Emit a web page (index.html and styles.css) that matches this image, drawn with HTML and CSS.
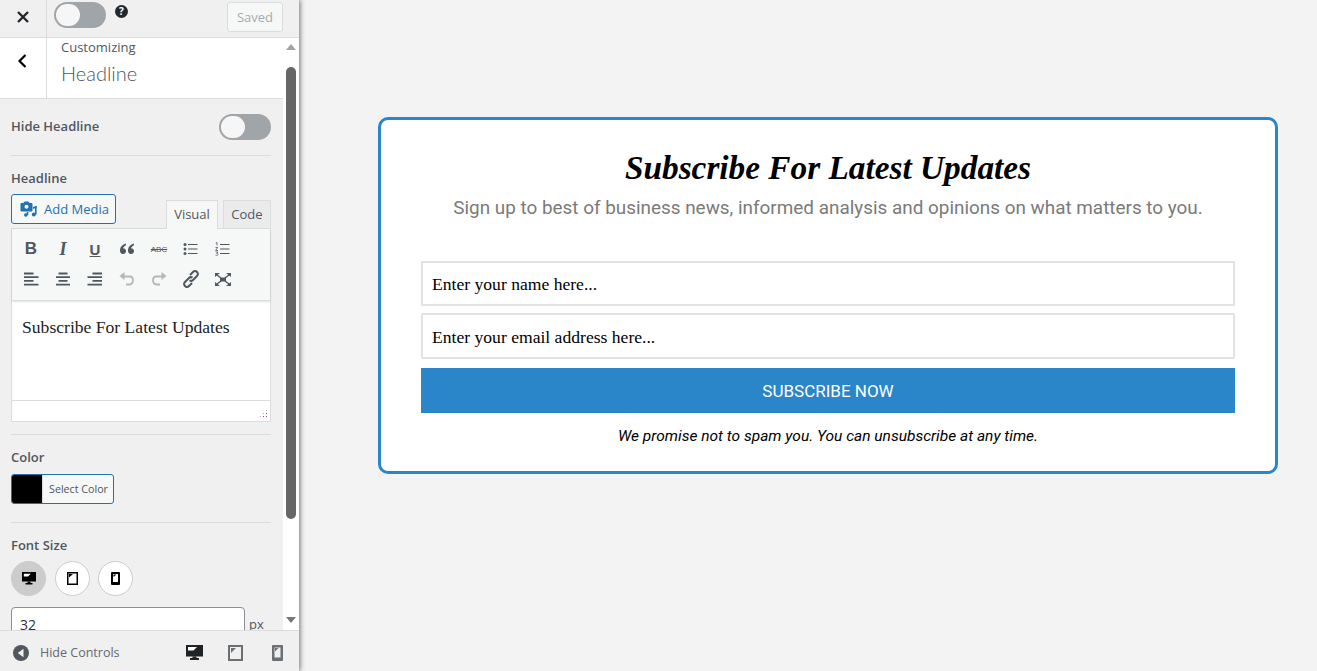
FILE: index.html
```html
<!DOCTYPE html>
<html lang="en">
<head>
<meta charset="UTF-8">
<title>Customizing Headline</title>
<link rel="stylesheet" href="styles.css">
</head>
<body>

<div class="app">
  <aside class="sidebar">
    <header class="topbar">
      <button class="close-btn">
        <svg width="14" height="14" viewBox="0 0 14 14"><path d="M2 2l10 10M12 2L2 12" stroke="#23282d" stroke-width="2.400" fill="none"/></svg>
      </button>
      <div class="topbar-main">
        <span class="toggle"><span class="knob"></span></span>
        <span class="help">?</span>
        <button class="saved-btn">Saved</button>
      </div>
    </header>

    <div class="scroller">
      <div class="panel">
        <div class="section-head">
          <button class="back-btn">
            <svg width="12" height="16" viewBox="0 0 12 16"><path d="M9.500 2L3.500 8l6 6" stroke="#000" stroke-width="2.200" fill="none"/></svg>
          </button>
          <div class="section-title">
            <span class="crumb">Customizing</span>
            <h3>Headline</h3>
          </div>
        </div>

        <div class="control control-row">
          <label class="ctl-label">Hide Headline</label>
          <span class="toggle"><span class="knob"></span></span>
        </div>

        <div class="control control-editor">
          <label class="ctl-label">Headline</label>
          <div class="editor-tools">
            <button class="media-btn">
              <svg width="18" height="16" viewBox="0 0 18 16"><path d="M1 2.500h2.500L4.500 1h4l1 1.500H12v7.500H1z" fill="#2271b1" stroke="#2271b1" stroke-linejoin="round"/><circle cx="6.500" cy="5.800" r="2" fill="#f6f7f7"/><path d="M15.800 5.500v8" stroke="#2271b1" stroke-width="1.600"/><path d="M13 6l3.600-1.200v2L13 8z" fill="#2271b1"/><circle cx="13.800" cy="13.500" r="2" fill="#2271b1"/><path d="M7.500 11v3" stroke="#2271b1" stroke-width="1.600"/><circle cx="5.800" cy="14" r="1.800" fill="#2271b1"/></svg>
              Add Media
            </button>
            <div class="tabs">
              <span class="tab tab-active">Visual</span>
              <span class="tab">Code</span>
            </div>
          </div>
          <div class="editor">
            <div class="toolbar">
              <div class="tool-row">
                <span class="tool tool-b">B</span>
                <span class="tool tool-i">I</span>
                <span class="tool tool-u">U</span>
                <span class="tool"><svg width="16" height="14" viewBox="0 0 16 14"><path d="M7 1.500C3.500 2.500 1 5 1 8.500c0 2.200 1.200 3.500 3 3.500s3-1.300 3-3-1.200-2.800-3-2.800c.6-1.500 1.700-2.400 3-3zM15 1.500c-3.500 1-6 3.500-6 7 0 2.200 1.200 3.500 3 3.500s3-1.300 3-3-1.200-2.800-3-2.800c.6-1.500 1.700-2.400 3-3z" fill="#50575e"/></svg></span>
                <span class="tool tool-abc">ABC</span>
                <span class="tool"><svg width="16" height="14" viewBox="0 0 16 14"><path d="M5 2.500h9.500M5 7h9.500M5 11.500h9.500" stroke="#50575e" stroke-width="1"/><circle cx="2" cy="2.500" r="1.500" fill="#50575e"/><circle cx="2" cy="7" r="1.500" fill="#50575e"/><circle cx="2" cy="11.500" r="1.500" fill="#50575e"/></svg></span>
                <span class="tool"><svg width="16" height="14" viewBox="0 0 16 14"><path d="M5 2.500h9.500M5 7h9.500M5 11.500h9.500" stroke="#50575e" stroke-width="1"/><path d="M.8 1L2 .5v3M.5 5.500h2.200L.6 8.500h2.400M.6 10h2.200l-1 1.500c1 0 1.200.5 1.200 1s-.8 1-2.400.8" stroke="#50575e" stroke-width=".8" fill="none"/></svg></span>
              </div>
              <div class="tool-row">
                <span class="tool"><svg width="16" height="14" viewBox="0 0 16 14"><path d="M1 1.500h9.500M1 5.200h14.500M1 8.900h9.500M1 12.600h14.500" stroke="#50575e" stroke-width="1.800"/></svg></span>
                <span class="tool"><svg width="16" height="14" viewBox="0 0 16 14"><path d="M3.500 1.500h9M1 5.200h14M3.500 8.900h9M1 12.600h14" stroke="#50575e" stroke-width="1.800"/></svg></span>
                <span class="tool"><svg width="16" height="14" viewBox="0 0 16 14"><path d="M5.500 1.500H15M.5 5.200H15M5.500 8.900H15M.5 12.600H15" stroke="#50575e" stroke-width="1.800"/></svg></span>
                <span class="tool"><svg width="18" height="16" viewBox="0 0 18 16"><path d="M6 5.500h5.500c2.300 0 3.500 1.700 3.500 3.700s-1.300 4-3.500 4.300H8" stroke="#b5b8bb" stroke-width="1.800" fill="none"/><path d="M6.500 1L1.500 5l5 4z" fill="#b5b8bb"/></svg></span>
                <span class="tool"><svg width="18" height="16" viewBox="0 0 18 16"><path d="M12 5.500H6.500C4.200 5.500 3 7.200 3 9.200s1.300 4 3.500 4.300H10" stroke="#b5b8bb" stroke-width="1.800" fill="none"/><path d="M11.500 1l5 4-5 4z" fill="#b5b8bb"/></svg></span>
                <span class="tool"><svg width="18" height="18" viewBox="0 0 18 18"><path d="M8 5l3-3c1.200-1.200 3-1.200 4 0s1.200 2.800 0 4l-4 4c-1 1-2.400 1-3.400.2M10 13l-3 3c-1.200 1.200-3 1.200-4 0s-1.200-2.800 0-4l4-4c1-1 2.400-1 3.400-.2" stroke="#50575e" stroke-width="2" fill="none"/></svg></span>
                <span class="tool"><svg width="18" height="15" viewBox="0 0 18 15"><path d="M1 1h5L1 5zM17 1h-5l5 4zM1 14h5l-5-4zM17 14h-5l5-4z" fill="#50575e"/><path d="M3 3l4 3M15 3l-4 3M3 12l4-3M15 12l-4-3" stroke="#50575e" stroke-width="1.400"/><path d="M6 5.500h6v4H6z" fill="#50575e"/></svg></span>
              </div>
            </div>
            <div class="editor-body">Subscribe For Latest Updates</div>
            <div class="editor-status"><span class="grip"></span></div>
          </div>
        </div>

        <div class="control">
          <label class="ctl-label">Color</label>
          <button class="color-btn"><span class="swatch"></span><span class="color-text">Select Color</span></button>
        </div>

        <div class="control control-last">
          <label class="ctl-label">Font Size</label>
          <div class="devices">
            <span class="device device-active">
              <svg width="14" height="13" viewBox="0 0 14 13"><path d="M0 0h14v9.500H0z" fill="#000"/><path d="M1.800 1.800h7L6 4.500H1.800z" fill="#fff"/><path d="M5.500 9.500h3V11h2v1.500h-7V11h2z" fill="#000"/></svg>
            </span>
            <span class="device">
              <svg width="11" height="13" viewBox="0 0 11 13"><path d="M0 0h11v13H0zM1.500 1.500v10h8v-10z" fill="#000" fill-rule="evenodd"/><path d="M2 2h4L2 5.500z" fill="#000"/></svg>
            </span>
            <span class="device">
              <svg width="9" height="13" viewBox="0 0 9 13"><path d="M0 1a1 1 0 011-1h7a1 1 0 011 1v11a1 1 0 01-1 1H1a1 1 0 01-1-1zM2 2v8h5V2z" fill="#000" fill-rule="evenodd"/><path d="M2.500 2.500h3l-3 2.500z" fill="#000"/></svg>
            </span>
          </div>
          <div class="size-row">
            <input class="size-input" type="text" value="32">
            <span class="unit">px</span>
          </div>
        </div>
      </div>

      <div class="scrollbar">
        <span class="arrow arrow-up"></span>
        <span class="thumb"></span>
        <span class="arrow arrow-down"></span>
      </div>
    </div>

    <footer class="footbar">
      <button class="hide-btn">
        <svg width="16" height="16" viewBox="0 0 16 16"><circle cx="8" cy="8" r="8" fill="#50575e"/><path d="M10.500 3.800v8.400L4.800 8z" fill="#f0f0f0"/></svg>
        Hide Controls
      </button>
      <div class="foot-devices">
        <svg class="foot-desktop" width="17" height="16" viewBox="0 0 17 16"><path d="M0 0h17v11.500H0z" fill="#1d2327"/><path d="M2 2h9L7.500 5.500H2z" fill="#fff"/><path d="M6.500 11.500h4V13h2.500v2H4v-2h2.500z" fill="#1d2327"/></svg>
        <svg class="foot-tablet" width="15" height="16" viewBox="0 0 15 16"><path d="M0 0h15v16H0zM2 2v12h11V2z" fill="#6b7075" fill-rule="evenodd"/><path d="M3 3h5L3 8z" fill="#6b7075"/></svg>
        <svg class="foot-phone" width="11" height="16" viewBox="0 0 11 16"><path d="M0 1a1 1 0 011-1h9a1 1 0 011 1v14a1 1 0 01-1 1H1a1 1 0 01-1-1zM2.500 2.500v10h6v-10z" fill="#6b7075" fill-rule="evenodd"/><path d="M3 3h3.500L3 6.500z" fill="#6b7075"/></svg>
      </div>
    </footer>
  </aside>

  <main class="preview">
    <section class="card">
      <h1 class="card-title">Subscribe For Latest Updates</h1>
      <p class="card-sub">Sign up to best of business news, informed analysis and opinions on what matters to you.</p>
      <form class="sub-form">
        <input class="field" type="text" placeholder="Enter your name here...">
        <input class="field" type="text" placeholder="Enter your email address here...">
        <button class="sub-btn" type="button">SUBSCRIBE NOW</button>
      </form>
      <p class="card-note">We promise not to spam you. You can unsubscribe at any time.</p>
    </section>
  </main>
</div>

</body>
</html>
```

FILE: styles.css
```css
* {
    box-sizing: border-box;
}
html, body {
    margin: 0;
    height: 100%;
    overflow: hidden;
}
body {
    font-family: "Open Sans", "Noto Sans", sans-serif;
    background: #f3f3f3;
}
button {
    font-family: inherit;
    padding: 0;
}
.app {
    display: flex;
    height: 671px;
}

/* left panel */
.sidebar {
    width: 299px;
    flex: none;
    display: flex;
    flex-direction: column;
    background: #f0f0f0;
    box-shadow: 1px 0 5px rgba(0, 0, 0, 0.55);
}
.topbar {
    height: 38px;
    flex: none;
    display: flex;
    border-bottom: 1px solid #dcdcde;
}
.close-btn {
    width: 47px;
    border: 0;
    border-right: 1px solid #dcdcde;
    background: none;
    display: flex;
    align-items: center;
    justify-content: center;
    padding-bottom: 4px;
}
.topbar-main {
    flex: 1;
    display: flex;
    align-items: flex-start;
    padding: 2px 16px 0 7px;
}
.toggle {
    display: inline-block;
    width: 52px;
    height: 26px;
    border-radius: 13px;
    background: #a0a5aa;
    padding: 2px;
}
.knob {
    display: block;
    width: 24px;
    height: 22px;
    border-radius: 11px;
    background: #f6f6f6;
}
.help {
    width: 13px;
    height: 13px;
    margin: 3px 0 0 9px;
    border-radius: 50%;
    background: #23282d;
    color: #fff;
    font-size: 10px;
    font-weight: 700;
    line-height: 13px;
    text-align: center;
}
.saved-btn {
    margin: 0 0 0 auto;
    width: 56px;
    height: 30px;
    border: 1px solid #dcdcde;
    border-radius: 3px;
    background: #f6f7f7;
    color: #a7aaad;
    font-size: 13px;
}
.scroller {
    flex: 1;
    display: flex;
    min-height: 0;
    overflow: hidden;
}
.panel {
    flex: 1;
    min-width: 0;
}
.section-head {
    height: 61px;
    display: flex;
    background: #fff;
    border-bottom: 1px solid #dcdcde;
}
.back-btn {
    width: 47px;
    flex: none;
    border: 0;
    border-right: 1px solid #dcdcde;
    background: #fff;
    display: flex;
    align-items: center;
    justify-content: center;
    padding: 0 2px 14px 0;
}
.section-title {
    padding-left: 14px;
}
.crumb {
    display: block;
    font-size: 13px;
    line-height: 18px;
    color: #50575e;
}
.section-title h3 {
    margin: 4px 0 0;
    font-family: Lato, sans-serif;
    font-size: 20px;
    font-weight: 300;
    line-height: 26px;
    color: #50575e;
}
.control {
    margin: 0 12px 0 11px;
    padding: 13px 0 18px;
    border-bottom: 1px solid #dcdcde;
}
.control-row {
    display: flex;
    align-items: center;
    justify-content: space-between;
    padding: 15px 0;
}
.control-row .ctl-label {
    padding-bottom: 2px;
}
.control-editor {
    padding: 13px 0 12px;
}
.control-last {
    border: 0;
}
.ctl-label {
    display: block;
    font-size: 13px;
    font-weight: 600;
    line-height: 18px;
    color: #50575e;
}
.editor-tools {
    display: flex;
    justify-content: space-between;
    align-items: flex-end;
    margin-top: 7px;
    height: 34px;
}
.media-btn {
    align-self: flex-start;
    width: 105px;
    height: 30px;
    border: 1px solid #2271b1;
    border-radius: 3px;
    background: #f6f7f7;
    color: #2271b1;
    font-size: 13px;
    display: flex;
    align-items: center;
    gap: 6px;
    padding-left: 8px;
}
.tabs {
    display: flex;
    gap: 5px;
}
.tab {
    width: 48px;
    height: 28px;
    border: 1px solid #dcdcde;
    border-bottom: 0;
    background: #ebebeb;
    color: #50575e;
    font-size: 13px;
    line-height: 26px;
    text-align: center;
}
.tab-active {
    height: 29px;
    width: 52px;
    margin-bottom: -1px;
    background: #f6f7f7;
    position: relative;
}
.editor {
    border: 1px solid #dcdcde;
    background: #fff;
}
.toolbar {
    height: 72px;
    padding: 5px 0 0 3px;
    background: #f6f7f7;
    border-bottom: 1px solid #dcdcde;
    box-shadow: 0 1px 2px rgba(0, 0, 0, 0.12);
}
.tool-row {
    display: flex;
    height: 30px;
}
.tool {
    width: 32px;
    height: 30px;
    display: flex;
    align-items: center;
    justify-content: center;
    color: #50575e;
    font-family: "Liberation Sans", sans-serif;
    font-size: 17px;
}
.tool-b {
    font-weight: 700;
}
.tool-i {
    font-family: "Liberation Serif", serif;
    font-style: italic;
    font-weight: 700;
    font-size: 18px;
}
.tool-u {
    text-decoration: underline;
    font-size: 15px;
    font-weight: 700;
}
.tool-abc {
    font-size: 8px;
    text-decoration: line-through;
}
.editor-body {
    height: 99px;
    padding: 14px 10px;
    font-family: "Liberation Serif", "DejaVu Serif", serif;
    font-size: 17.600px;
    line-height: 24px;
    color: #222;
}
.editor-status {
    height: 21px;
    border-top: 1px solid #dcdcde;
    position: relative;
}
.grip {
    position: absolute;
    right: 2px;
    bottom: 3px;
    width: 9px;
    height: 9px;
    background: radial-gradient(circle, #7e4a80 35%, transparent 40%) 0 0 / 3px 3px;
    clip-path: polygon(100% 0, 100% 100%, 0 100%);
}
.color-btn {
    margin-top: 8px;
    display: flex;
    width: 103px;
    height: 30px;
    border: 1px solid #2271b1;
    border-radius: 3px;
    background: #f6f7f7;
    overflow: hidden;
}
.swatch {
    width: 30px;
    height: 100%;
    background: #000;
}
.color-text {
    flex: 1;
    padding-left: 1px;
    font-size: 10.700px;
    line-height: 28px;
    color: #50575e;
    border-left: 1px solid #dcdcde;
}
.devices {
    display: flex;
    gap: 8px;
    margin-top: 7px;
}
.device {
    width: 35px;
    height: 35px;
    border-radius: 50%;
    border: 1px solid #ccc;
    background: #fff;
    display: flex;
    align-items: center;
    justify-content: center;
}
.device-active {
    margin-right: 1px;
    background: #ccc;
}
.size-row {
    display: flex;
    align-items: center;
    margin-top: 11px;
}
.size-input {
    width: 234px;
    height: 34px;
    border: 1px solid #8c8f94;
    border-radius: 4px;
    padding: 0 8px;
    font: 14px "Open Sans", sans-serif;
    color: #2c3338;
}
.unit {
    margin: 0 0 0 4px;
    font-size: 13px;
    line-height: 18px;
    color: #50575e;
}
.scrollbar {
    width: 16px;
    flex: none;
    background: #fff;
    position: relative;
    padding-top: 29px;
    padding-left: 3px;
}
.thumb {
    display: block;
    width: 10px;
    height: 452px;
    border-radius: 5px;
    background: #666;
}
.arrow {
    position: absolute;
    left: 3px;
    width: 0;
    height: 0;
    border-left: 5px solid transparent;
    border-right: 5px solid transparent;
}
.arrow-up {
    top: 6px;
    border-bottom: 6px solid #a3a3a3;
}
.arrow-down {
    bottom: 7px;
    border-top: 6px solid #777;
}
.footbar {
    height: 41px;
    flex: none;
    display: flex;
    align-items: center;
    justify-content: space-between;
    padding: 3px 16px 0 13px;
    border-top: 1px solid #dcdcde;
    background: #f0f0f0;
    position: relative;
}
.hide-btn {
    border: 0;
    background: none;
    display: flex;
    align-items: center;
    gap: 11px;
    font-size: 12.500px;
    color: #646970;
}
.foot-devices {
    display: flex;
    align-items: center;
}
.foot-tablet {
    margin-left: 25px;
}
.foot-phone {
    margin-left: 29px;
}

/* preview */
.preview {
    flex: 1;
    display: flex;
    justify-content: center;
    padding: 117px 39px 0 79px;
    align-items: flex-start;
}
.card {
    width: 100%;
    height: 357px;
    padding: 28px 40px 0;
    background: #fff;
    border: 3px solid #2a85c9;
    border-radius: 10px;
    text-align: center;
}
.card-title {
    margin: 0;
    font-family: "Liberation Serif", serif;
    font-style: italic;
    font-weight: 700;
    font-size: 33.300px;
    line-height: 40px;
    color: #000;
}
.card-sub {
    margin: 7px 0 0;
    font-family: Roboto, sans-serif;
    font-size: 18.900px;
    line-height: 26px;
    color: #7a7a7a;
}
.sub-form {
    display: flex;
    flex-direction: column;
    gap: 7px;
    margin-top: 40px;
}
.field {
    height: 45px;
    border: 2px solid #e3e3e3;
    padding: 2px 9px 0;
    font: 17.600px "Liberation Serif", serif;
}
.field + .field {
    height: 46px;
}
.field::placeholder {
    color: #000;
    opacity: 1;
}
.sub-btn {
    height: 45px;
    margin-top: 2px;
    border: 0;
    background: #2a85c9;
    color: #fff;
    font-family: Roboto, sans-serif;
    font-size: 17px;
}
.card-note {
    margin: 12px 0 0;
    font-family: Roboto, sans-serif;
    font-style: italic;
    font-size: 15.500px;
    line-height: 22px;
    color: #000;
}
```
